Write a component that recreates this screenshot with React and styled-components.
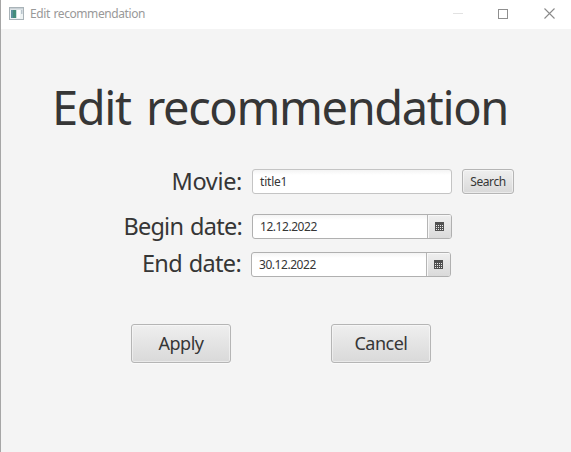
import React from "react";
import styled, { createGlobalStyle } from "styled-components";

const GlobalStyle = createGlobalStyle`
  *, *::before, *::after { box-sizing: border-box; }
  body { margin: 0; background: #f4f4f4; }
`;

const Window = styled.div`
  width: 571px;
  height: 452px;
  display: flex;
  flex-direction: column;
  border-left: 1px solid #a6a6a6;
  background: #f4f4f4;
  color: #363636;
  font-family: "Noto Sans", "Open Sans", sans-serif;
  overflow: hidden;
`;

const TitleBar = styled.header`
  flex: none;
  height: 29px;
  display: flex;
  align-items: center;
  padding: 0 16px 2px 8px;
  background: #fff;
`;

const WindowTitle = styled.span`
  flex: 1;
  margin-left: 6px;
  font-size: 12px;
  line-height: 16px;
  letter-spacing: -0.42px;
  word-spacing: 1px;
  color: #999;
  white-space: nowrap;
`;

const WindowControls = styled.div`
  display: flex;
  align-items: center;
  gap: 35px;
`;

const Content = styled.main`
  display: flex;
  flex-direction: column;
`;

const Heading = styled.h1`
  margin: 43px 0 0 51px;
  height: 70px;
  font-size: 47px;
  line-height: 70px;
  font-weight: 400;
  letter-spacing: -1.38px;
  word-spacing: 4.5px;
  white-space: nowrap;
`;

const FormRow = styled.div`
  display: flex;
  align-items: center;
  height: 25px;
  margin-top: ${(p) => p.$top}px;
`;

const FieldLabel = styled.label`
  width: ${(p) => p.$width}px;
  margin-right: 10px;
  padding-bottom: ${(p) => p.$lift}px;
  display: flex;
  justify-content: flex-end;
  font-size: 23.5px;
  line-height: 32px;
  letter-spacing: ${(p) => p.$tracking}px;
  word-spacing: 1.5px;
  white-space: nowrap;
`;

const Field = styled.div`
  width: 200px;
  height: 25px;
  display: flex;
  border: 1px solid ${(p) => (p.$strong ? "#b0b0b0" : "#c4c4c4")};
  border-radius: 3px;
  background: linear-gradient(#f4f4f4, #fff 5px);
  overflow: hidden;
`;

const Value = styled.span`
  flex: 1;
  padding-left: 7px;
  font-size: 12px;
  line-height: 23px;
  letter-spacing: ${(p) => p.$tracking}px;
`;

const CalendarButton = styled.button`
  width: 24px;
  padding: 0 1px 0 0;
  display: flex;
  align-items: center;
  justify-content: center;
  border: 0;
  border-left: 1px solid #b5b5b5;
  background: linear-gradient(#efefef, #dadada);
  box-shadow: inset 1px 1px #f8f8f8;
`;

const Button = styled.button`
  width: ${(p) => p.$width}px;
  height: ${(p) => p.$height}px;
  padding: ${(p) => p.$drop || 0}px 0 0;
  border: 1px solid #b5b5b5;
  border-radius: 3px;
  background: linear-gradient(#efefef, #d9d9d9);
  box-shadow: inset 0 0 0 1px rgba(255, 255, 255, 0.45), 0 1px #fafafa;
  color: inherit;
  font-family: inherit;
  font-size: ${(p) => p.$size}px;
  letter-spacing: ${(p) => p.$tracking}px;
  line-height: 1.3;
`;

const SearchButton = styled(Button)`
  margin-left: 10px;
`;

const Actions = styled.div`
  display: flex;
  gap: 100px;
  margin: 47px 0 0 130px;
`;

const AppIcon = () => (
  <svg width="15" height="13" viewBox="0 0 15 13">
    <rect x="0.5" y="0.5" width="14" height="12" fill="#eef3f4" stroke="#a9b3b8" />
    <rect x="1" y="1" width="13" height="1.5" fill="#c9d1d6" />
    <rect x="2" y="3" width="5.5" height="8" fill="#438d7a" />
    <rect x="2" y="3" width="2" height="8" fill="#5b8f9c" />
    <rect x="7.5" y="3" width="3.5" height="8" fill="#fff" />
    <rect x="12" y="3" width="1.5" height="4" fill="#b8c4cc" />
  </svg>
);

const MinimizeIcon = () => (
  <svg width="11" height="11" viewBox="0 0 11 11">
    <path d="M1 5.5H11" stroke="#e2e2e2" />
  </svg>
);

const MaximizeIcon = () => (
  <svg width="10" height="10" viewBox="0 0 10 10">
    <rect x="0.5" y="0.5" width="9" height="9" fill="none" stroke="#8f8f8f" />
  </svg>
);

const CloseIcon = () => (
  <svg width="12" height="11" viewBox="0 0 12 11">
    <path d="M1.5 0.5L11.5 10.5M11.5 0.5L1.5 10.5" stroke="#8a8a8a" strokeWidth="1.1" />
  </svg>
);

const CalendarIcon = () => (
  <svg width="9" height="9" viewBox="0 0 9 9" shapeRendering="crispEdges">
    <rect width="9" height="9" fill="#505050" />
    {[3, 5, 7].map((y) =>
      [1, 3, 5, 7].map((x) => (
        <rect key={`${x}-${y}`} x={x} y={y} width="1" height="1" fill="#e8e8e8" />
      ))
    )}
  </svg>
);

const DateField = ({ value, label }) => (
  <Field $strong>
    <Value $tracking={-0.45}>{value}</Value>
    <CalendarButton aria-label={label}>
      <CalendarIcon />
    </CalendarButton>
  </Field>
);

export default function App() {
  return (
    <>
      <GlobalStyle />
      <Window>
        <TitleBar>
          <AppIcon />
          <WindowTitle>Edit recommendation</WindowTitle>
          <WindowControls>
            <MinimizeIcon />
            <MaximizeIcon />
            <CloseIcon />
          </WindowControls>
        </TitleBar>
        <Content>
          <Heading>Edit recommendation</Heading>
          <FormRow $top={27}>
            <FieldLabel $width={241} $tracking={-0.35} $lift={1}>Movie:</FieldLabel>
            <Field>
              <Value $tracking={-0.2}>title1</Value>
            </Field>
            <SearchButton $width={52} $height={25} $size={12} $tracking={-0.4}>
              Search
            </SearchButton>
          </FormRow>
          <FormRow $top={20}>
            <FieldLabel $width={241} $tracking={-0.75} $lift={2}>Begin date:</FieldLabel>
            <DateField value="12.12.2022" label="Pick begin date" />
          </FormRow>
          <FormRow $top={13}>
            <FieldLabel $width={240} $tracking={-0.7} $lift={3}>End date:</FieldLabel>
            <DateField value="30.12.2022" label="Pick end date" />
          </FormRow>
          <Actions>
            <Button $width={100} $height={39} $size={18} $tracking={-0.5} $drop={1}>Apply</Button>
            <Button $width={100} $height={39} $size={18} $tracking={-0.5} $drop={1}>Cancel</Button>
          </Actions>
        </Content>
      </Window>
    </>
  );
}
